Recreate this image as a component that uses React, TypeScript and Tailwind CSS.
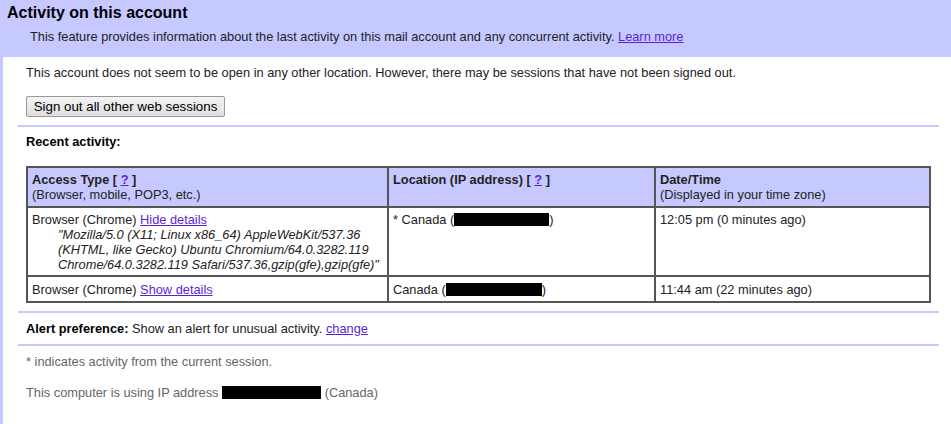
const link = "text-[#5b1fdc] underline"

function Redacted({ width }: { width: string }) {
  return <span className={`inline-block h-[13px] bg-black align-[-2px] ${width}`} />
}

function Separator() {
  return <div className="ml-[15px] mr-[12px] h-[2px] bg-[#c6c9ff]" />
}

export default function App() {
  return (
    <div className="min-h-[424px] bg-[#c6c9ff] font-['Liberation_Sans',Arial,sans-serif] text-[12.8px] leading-[16px] text-[#222]">
      <div className="h-[57px] pt-[3px]">
        <h1 className="pl-[7px] text-[16px] font-bold leading-[20px] text-black">
          Activity on this account
        </h1>
        <p className="mt-[6px] pl-[30px]">
          This feature provides information about the last activity on this mail account and any concurrent activity.{" "}
          <a href="#" className={link}>
            Learn more
          </a>
        </p>
      </div>

      <div className="ml-[3px] min-h-[367px] bg-white pt-[8px]">
        <p className="pl-[23px]">
          This account does not seem to be open in any other location. However, there may be sessions that have not been signed out.
        </p>
        <div className="pl-[23px] pt-[15px]">
          <button
            type="button"
            className="h-[21px] w-[199px] rounded-[2px] border border-[#999] bg-gradient-to-b from-[#f4f4f4] to-[#dedede] text-[13.333px] leading-[16px] text-black"
          >
            Sign out all other web sessions
          </button>
        </div>
        <div className="mt-[8px]">
          <Separator />
        </div>

        <p className="pl-[23px] pt-[7px] font-bold text-black">Recent activity:</p>

        <div className="pl-[23px] pt-[16px]">
          <table className="w-[905px] table-fixed border-separate border-spacing-0 border border-[#555] text-left leading-[15px]">
            <colgroup>
              <col className="w-[361px]" />
              <col className="w-[267px]" />
              <col />
            </colgroup>
            <thead>
              <tr className="bg-[#c6c9ff] align-top">
                <th className="border border-[#555] px-[4px] pt-[4px] pb-[4px] font-normal">
                  <span className="font-bold">
                    Access Type [ <a href="#" className={link}>?</a> ]
                  </span>
                  <br />
                  (Browser, mobile, POP3, etc.)
                </th>
                <th className="border border-[#555] px-[4px] pt-[4px] pb-[4px] font-normal">
                  <span className="font-bold">
                    Location (IP address) [ <a href="#" className={link}>?</a> ]
                  </span>
                </th>
                <th className="border border-[#555] px-[4px] pt-[4px] pb-[4px] font-normal">
                  <span className="font-bold">Date/Time</span>
                  <br />
                  (Displayed in your time zone)
                </th>
              </tr>
            </thead>
            <tbody>
              <tr className="align-top">
                <td className="border border-[#555] px-[4px] pt-[4px] pb-[3px]">
                  Browser (Chrome){" "}
                  <a href="#" className={link}>
                    Hide details
                  </a>
                  <div className="whitespace-nowrap pl-[26px] italic">
                    "Mozilla/5.0 (X11; Linux x86_64) AppleWebKit/537.36
                    <br />
                    (KHTML, like Gecko) Ubuntu Chromium/64.0.3282.119
                    <br />
                    Chrome/64.0.3282.119 Safari/537.36,gzip(gfe),gzip(gfe)"
                  </div>
                </td>
                <td className="border border-[#555] px-[4px] pt-[4px] pb-[3px]">
                  * Canada (<Redacted width="w-[95px]" />)
                </td>
                <td className="border border-[#555] px-[4px] pt-[4px] pb-[3px]">12:05 pm (0 minutes ago)</td>
              </tr>
              <tr className="align-top">
                <td className="border border-[#555] px-[4px] pt-[5px] pb-[4px]">
                  Browser (Chrome){" "}
                  <a href="#" className={link}>
                    Show details
                  </a>
                </td>
                <td className="border border-[#555] px-[4px] pt-[5px] pb-[4px]">
                  Canada (<Redacted width="w-[96px]" />)
                </td>
                <td className="border border-[#555] px-[4px] pt-[5px] pb-[4px]">11:44 am (22 minutes ago)</td>
              </tr>
            </tbody>
          </table>
        </div>

        <div className="mt-[8px]">
          <Separator />
        </div>
        <p className="pl-[23px] pt-[8px] pb-[7px]">
          <span className="font-bold text-black">Alert preference:</span> Show an alert for unusual activity.{" "}
          <a href="#" className={link}>
            change
          </a>
        </p>
        <Separator />

        <p className="pl-[23px] pt-[8px] text-[#666]">* indicates activity from the current session.</p>
        <p className="pl-[23px] pt-[15px] text-[#666]">
          This computer is using IP address <Redacted width="w-[99px]" /> (Canada)
        </p>
      </div>
    </div>
  )
}
